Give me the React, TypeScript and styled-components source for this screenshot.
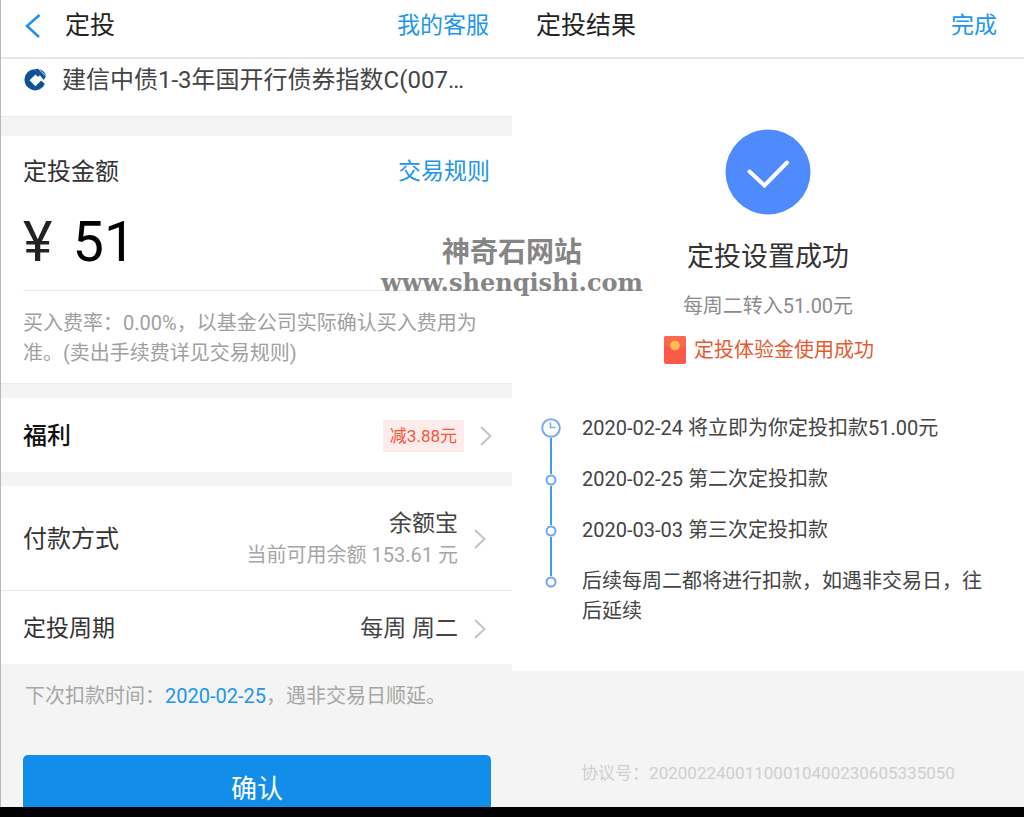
import React from "react";
import styled, { createGlobalStyle } from "styled-components";

const blue = "#2196ec";
const grey = "#f4f4f4";

const GlobalStyle = createGlobalStyle`
  * { box-sizing: border-box; }
  body {
    margin: 0;
    background: #fff;
    color: #333;
    font-family: Roboto, "Noto Sans CJK SC", sans-serif;
  }
  h1, h2, p, ol { margin: 0; padding: 0; font-weight: 400; }
  button { font-family: inherit; border: 0; padding: 0; background: none; cursor: pointer; }
  a { text-decoration: none; }
  svg { display: block; flex: none; }
`;

const Page = styled.div`
  position: relative;
  min-height: 100vh;
  display: flex;
  flex-direction: column;
`;

const Screens = styled.main`
  flex: 1;
  display: grid;
  grid-template-columns: 1fr 1fr;
`;

const Screen = styled.section<{ $edge?: boolean }>`
  min-width: 0;
  display: flex;
  flex-direction: column;
  background: ${grey};
  border-left: ${(p) => (p.$edge ? "1px solid #b8b8b8" : "0")};
`;

const BottomBar = styled.footer`
  height: 10px;
  background: #000;
`;

const Header = styled.header<{ $wide?: boolean }>`
  display: flex;
  align-items: center;
  height: 59px;
  padding: 0 ${(p) => (p.$wide ? "27px" : "23px")} 6px 24px;
  background: #fff;
  border-bottom: 2px solid #e6e6e6;
`;

const BackButton = styled.button`
  margin-right: 22px;
`;

const ScreenTitle = styled.h1`
  flex: 1;
  font-size: 25px;
  line-height: 32px;
  color: #222;
`;

const TextLink = styled.a`
  font-size: 23px;
  line-height: 32px;
  color: ${blue};
`;

const FundRow = styled.div`
  display: flex;
  align-items: center;
  gap: 15px;
  height: 58px;
  padding: 0 40px 16px 23px;
  background: #fff;
  border-bottom: 1px solid #e8e8e8;
`;

const FundName = styled.p`
  font-size: 24px;
  line-height: 36px;
  white-space: nowrap;
  color: #444;
`;

const AmountCard = styled.div`
  margin-top: 19px;
  padding: 20px 22px 15px;
  background: #fff;
  border-bottom: 1px solid #ececec;
`;

const AmountHead = styled.div`
  display: flex;
  align-items: center;
  justify-content: space-between;
`;

const Label = styled.span<{ $strong?: boolean; $small?: boolean }>`
  font-size: ${(p) => (p.$small ? "23px" : "24px")};
  line-height: 32px;
  font-weight: ${(p) => (p.$strong ? 500 : 400)};
  color: ${(p) => (p.$strong ? "#111" : "#333")};
`;

const Amount = styled.p`
  display: flex;
  align-items: center;
  gap: 20px;
  height: 103px;
  padding-top: 6px;
  border-bottom: 1px solid #e9e9e9;
  font-size: 56px;
  line-height: 64px;
  color: #000;
`;

const Currency = styled.span`
  color: #222;
`;

const Note = styled.p`
  margin-top: 17px;
  font-size: 20px;
  line-height: 30px;
  color: #a0a0a0;
`;

const Row = styled.button<{ $height: number; $gap?: boolean; $line?: boolean; $wide?: boolean }>`
  display: flex;
  align-items: center;
  gap: 16px;
  width: 100%;
  height: ${(p) => p.$height}px;
  margin-top: ${(p) => (p.$gap ? "14px" : "0")};
  padding: 2px ${(p) => (p.$wide ? "20px" : "26px")} 0 22px;
  background: #fff;
  border-bottom: ${(p) => (p.$line ? "1px solid #e9e9e9" : "0")};
  text-align: left;
`;

const RowValue = styled.span`
  flex: 1;
  display: flex;
  flex-direction: column;
  align-items: flex-end;
  font-size: 23px;
  line-height: 32px;
  color: #444;
`;

const Hint = styled.span`
  font-size: 20px;
  line-height: 30px;
  color: #a6a6a6;
`;

const Discount = styled.span`
  height: 32px;
  padding: 0 7px;
  background: #fdecea;
  font-size: 17px;
  line-height: 32px;
  color: #f4563c;
`;

const NextDate = styled.p`
  padding: 17px 24px 0;
  font-size: 20px;
  line-height: 30px;
  color: #a6a6a6;
`;

const DateText = styled.time`
  color: ${blue};
`;

const ConfirmArea = styled.div`
  height: 52px;
  margin-top: 44px;
  padding: 0 21px 0 22px;
  overflow: hidden;
`;

const ConfirmButton = styled.button`
  width: 100%;
  height: 62px;
  border-radius: 5px;
  background: #128eea;
  font-size: 26px;
  color: #fff;
`;

const Result = styled.div`
  flex: none;
  display: flex;
  flex-direction: column;
  align-items: center;
  padding: 70px 24px 45px;
  background: #fff;
`;

const ResultTitle = styled.h2`
  margin-top: 24px;
  font-size: 27px;
  line-height: 36px;
`;

const ResultSub = styled.p`
  margin-top: 16px;
  font-size: 20px;
  line-height: 30px;
  color: #8c8c8c;
`;

const Bonus = styled.p`
  display: flex;
  align-items: center;
  gap: 8px;
  margin-top: 14px;
  padding-left: 2px;
  font-size: 20px;
  line-height: 30px;
  color: #e8592f;
`;

const Timeline = styled.ol`
  align-self: stretch;
  margin-top: 48px;
  padding: 0 12px 0 4px;
  list-style: none;
`;

const Step = styled.li`
  display: flex;
  gap: 20px;
  font-size: 20px;
  line-height: 30px;
  color: #444;
`;

const Track = styled.span<{ $first?: boolean }>`
  flex: none;
  width: 22px;
  padding-top: ${(p) => (p.$first ? "5px" : "0")};
  display: flex;
  flex-direction: column;
  align-items: center;
`;

const Stem = styled.span<{ $from?: boolean }>`
  flex: ${(p) => (p.$from ? "1" : "none")};
  width: 2px;
  height: ${(p) => (p.$from ? "auto" : "10px")};
  background: #3d9fec;
`;

const StepText = styled.span<{ $last?: boolean }>`
  padding-bottom: ${(p) => (p.$last ? "0" : "21px")};
`;

const Agreement = styled.p`
  margin-top: 90px;
  text-align: center;
  font-size: 17px;
  line-height: 24px;
  color: #cfcfcf;
`;

const Watermark = styled.div`
  position: absolute;
  top: 234px;
  left: 50%;
  transform: translateX(-50%);
  text-align: center;
  color: #858585;
  pointer-events: none;
`;

const WatermarkName = styled.p`
  && { font-weight: 700; }
  font-family: "Noto Sans CJK SC", sans-serif;
  font-size: 28px;
  line-height: 32px;
`;

const WatermarkUrl = styled.p`
  && { font-weight: 700; }
  font-family: "DejaVu Serif", serif;
  font-size: 24px;
  line-height: 34px;
`;

const Chevron = () => (
  <svg width="12" height="20" viewBox="0 0 12 20" fill="none" stroke="#c4c4c8" strokeWidth="2">
    <path d="M1 1l9.5 9L1 19" />
  </svg>
);

const BankLogo = () => (
  <svg width="23" height="23" viewBox="0 0 23 23">
    <path
      fill="#0d5299"
      fillRule="evenodd"
      d="M10.500 1.200A10.600 10.600 0 1 0 20.800 16l-3.600-3.400-5.700 5.600-6-6 6-5.600 2.600 2.400 2.200-2.200z"
    />
    <path fill="#0d5299" d="M10.800 1.200l3.200-.5 7.800 7.800-2 3.500z" />
    <path fill="#0d5299" d="M15 .9a11 11 0 0 1 7.300 7z" />
  </svg>
);

const Clock = () => (
  <svg width="20" height="20" viewBox="0 0 20 20" fill="none" stroke="#7aa8f8" strokeWidth="2">
    <circle cx="10" cy="10" r="8.800" />
    <path d="M9.500 4.500v5h5" strokeWidth="1.500" />
  </svg>
);

const Dot = () => (
  <svg width="12" height="12" viewBox="0 0 12 12" fill="none" stroke="#6fa3f8" strokeWidth="2">
    <circle cx="6" cy="6" r="4.500" />
  </svg>
);

const RedPacket = () => (
  <svg width="22" height="28" viewBox="0 0 22 28">
    <rect width="22" height="28" rx="2" fill="#fb5a4b" />
    <path d="M0 2a2 2 0 0 1 2-2h18a2 2 0 0 1 2 2v7q-11 7-22 0z" fill="#f76a50" />
    <circle cx="11" cy="9.500" r="4.800" fill="#fdbf4a" />
  </svg>
);

export default function App() {
  return (
    <>
      <GlobalStyle />
      <Page>
        <Screens>
          <Screen $edge>
            <Header>
              <BackButton aria-label="返回">
                <svg width="18" height="24" viewBox="0 0 18 24" fill="none" stroke="#1f90e6" strokeWidth="2.500">
                  <path d="M14.500 1L2 12l12 11" />
                </svg>
              </BackButton>
              <ScreenTitle>定投</ScreenTitle>
              <TextLink href="#service">我的客服</TextLink>
            </Header>
            <FundRow>
              <BankLogo />
              <FundName>建信中债1-3年国开行债券指数C(007…</FundName>
            </FundRow>
            <AmountCard>
              <AmountHead>
                <Label>定投金额</Label>
                <TextLink href="#rules">交易规则</TextLink>
              </AmountHead>
              <Amount>
                <Currency>¥</Currency>
                <span>51</span>
              </Amount>
              <Note>买入费率：0.00%，以基金公司实际确认买入费用为准。(卖出手续费详见交易规则)</Note>
            </AmountCard>
            <Row $height={74} $gap $wide>
              <Label $strong>福利</Label>
              <RowValue>
                <Discount>减3.88元</Discount>
              </RowValue>
              <Chevron />
            </Row>
            <Row $height={105} $gap $line>
              <Label>付款方式</Label>
              <RowValue>
                余额宝
                <Hint>当前可用余额 153.61 元</Hint>
              </RowValue>
              <Chevron />
            </Row>
            <Row $height={73}>
              <Label $small>定投周期</Label>
              <RowValue>每周 周二</RowValue>
              <Chevron />
            </Row>
            <NextDate>
              下次扣款时间：<DateText dateTime="2020-02-25">2020-02-25</DateText>，遇非交易日顺延。
            </NextDate>
            <ConfirmArea>
              <ConfirmButton>确认</ConfirmButton>
            </ConfirmArea>
          </Screen>

          <Screen>
            <Header $wide>
              <ScreenTitle>定投结果</ScreenTitle>
              <TextLink href="#done">完成</TextLink>
            </Header>
            <Result>
              <svg width="86" height="86" viewBox="0 0 86 86" fill="none">
                <circle cx="43" cy="43" r="42.500" fill="#4f8bff" />
                <path d="M24.500 42.500l15 14 22.500-23" stroke="#fff" strokeWidth="4" strokeLinecap="round" />
              </svg>
              <ResultTitle>定投设置成功</ResultTitle>
              <ResultSub>每周二转入51.00元</ResultSub>
              <Bonus>
                <RedPacket />
                定投体验金使用成功
              </Bonus>
              <Timeline>
                <Step>
                  <Track $first>
                    <Clock />
                    <Stem $from />
                  </Track>
                  <StepText>2020-02-24 将立即为你定投扣款51.00元</StepText>
                </Step>
                <Step>
                  <Track>
                    <Stem />
                    <Dot />
                    <Stem $from />
                  </Track>
                  <StepText>2020-02-25 第二次定投扣款</StepText>
                </Step>
                <Step>
                  <Track>
                    <Stem />
                    <Dot />
                    <Stem $from />
                  </Track>
                  <StepText>2020-03-03 第三次定投扣款</StepText>
                </Step>
                <Step>
                  <Track>
                    <Stem />
                    <Dot />
                  </Track>
                  <StepText $last>后续每周二都将进行扣款，如遇非交易日，往后延续</StepText>
                </Step>
              </Timeline>
            </Result>
            <Agreement>协议号：20200224001100010400230605335050</Agreement>
          </Screen>
        </Screens>
        <BottomBar />
        <Watermark>
          <WatermarkName>神奇石网站</WatermarkName>
          <WatermarkUrl>www.shenqishi.com</WatermarkUrl>
        </Watermark>
      </Page>
    </>
  );
}
